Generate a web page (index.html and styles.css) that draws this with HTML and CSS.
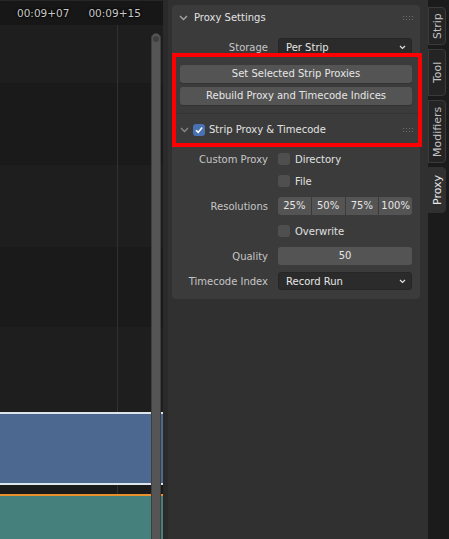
FILE: index.html
```html
<!DOCTYPE html>
<html>
<head>
    <title>Sequencer - Proxy</title>
    <link rel="stylesheet" href="styles.css">
</head>
<body>
    <div class="app">
        <div class="timeline">
            <div class="ruler">
                <span class="tc">00:09+07</span>
                <span class="tc">00:09+15</span>
            </div>
            <div class="chan chan-light" style="height: 58px"></div>
            <div class="chan chan-dark" style="height: 82px"></div>
            <div class="chan chan-light" style="height: 82px"></div>
            <div class="chan chan-dark" style="height: 80px"></div>
            <div class="chan chan-light" style="height: 85px"></div>
            <div class="strip-movie"></div>
            <div class="chan chan-dark" style="height: 9px"></div>
            <div class="strip-sound"></div>
            <div class="scrollbar"></div>
        </div>

        <div class="sidebar">
            <div class="panel">
                <div class="panel-head">
                    <svg class="chevron" width="9" height="6" viewBox="0 0 9 6"><path d="M1 1 L4.5 4.5 L8 1" fill="none" stroke="#a8a8a8" stroke-width="1.3"/></svg>
                    <span class="panel-title">Proxy Settings</span>
                    <span class="grip"></span>
                </div>

                <div class="prop-row storage-row">
                    <span class="prop-label">Storage</span>
                    <div class="dropdown">
                        <span>Per Strip</span>
                        <svg width="7" height="5" viewBox="0 0 7 5"><path d="M1 1 L3.5 3.5 L6 1" fill="none" stroke="#e0e0e0" stroke-width="1.2"/></svg>
                    </div>
                </div>

                <div class="btn-col">
                    <div class="btn">Set Selected Strip Proxies</div>
                    <div class="btn">Rebuild Proxy and Timecode Indices</div>
                </div>

                <div class="subpanel-head">
                    <svg class="chevron" width="9" height="6" viewBox="0 0 9 6"><path d="M1 1 L4.5 4.5 L8 1" fill="none" stroke="#8a8a8a" stroke-width="1.3"/></svg>
                    <span class="check checked">
                        <svg width="10" height="10" viewBox="0 0 10 10"><path d="M2 5.2 L4.2 7.4 L8.2 2.6" fill="none" stroke="#fff" stroke-width="1.6"/></svg>
                    </span>
                    <span class="panel-title">Strip Proxy &amp; Timecode</span>
                    <span class="grip"></span>
                </div>

                <div class="prop-row first-row">
                    <span class="prop-label">Custom Proxy</span>
                    <div class="check-field"><span class="check"></span>Directory</div>
                </div>
                <div class="prop-row tight-row">
                    <span class="prop-label"></span>
                    <div class="check-field"><span class="check"></span>File</div>
                </div>
                <div class="prop-row">
                    <span class="prop-label">Resolutions</span>
                    <div class="toggle-group">
                        <span class="toggle">25%</span>
                        <span class="toggle">50%</span>
                        <span class="toggle">75%</span>
                        <span class="toggle">100%</span>
                    </div>
                </div>
                <div class="prop-row">
                    <span class="prop-label"></span>
                    <div class="check-field"><span class="check"></span>Overwrite</div>
                </div>
                <div class="prop-row">
                    <span class="prop-label">Quality</span>
                    <div class="slider">50</div>
                </div>
                <div class="prop-row">
                    <span class="prop-label">Timecode Index</span>
                    <div class="dropdown">
                        <span>Record Run</span>
                        <svg width="7" height="5" viewBox="0 0 7 5"><path d="M1 1 L3.5 3.5 L6 1" fill="none" stroke="#e0e0e0" stroke-width="1.2"/></svg>
                    </div>
                </div>
            </div>
        </div>

        <div class="tabs">
            <div class="tab" style="height: 38px; margin-top: 7px">Strip</div>
            <div class="tab" style="height: 47px">Tool</div>
            <div class="tab" style="height: 63px">Modifiers</div>
            <div class="tab active" style="height: 46px">Proxy</div>
        </div>

        <div class="highlight"></div>
    </div>
</body>
</html>
```

FILE: styles.css
```css
body {
    margin: 0;
    background-color: #181818;
    font-family: "DejaVu Sans", sans-serif;
    font-size: 10px;
    color: #e6e6e6;
}

.app {
    position: relative;
    display: flex;
    width: 449px;
    height: 539px;
    overflow: hidden;
}

/* sequencer timeline */
.timeline {
    position: relative;
    display: flex;
    flex-direction: column;
    width: 163px;
    flex-shrink: 0;
    background-color: #1c1c1c;
}

.ruler {
    display: flex;
    align-items: center;
    gap: 19px;
    height: 25px;
    flex-shrink: 0;
    padding-left: 17px;
    box-sizing: border-box;
    background-color: #171717;
    border-top: 1px solid #262626;
    font-size: 10.5px;
    color: #c8c8c8;
}

.tc {
    text-shadow: 0 0 2px #000, 0 0 3px #000;
}

.chan {
    flex-shrink: 0;
    background-image: linear-gradient(90deg, transparent 117px, #313131 117px, #313131 118px, transparent 118px);
}

.chan-light {
    background-color: #1e1e1e;
}

.chan-dark {
    background-color: #1a1a1a;
}

.strip-movie {
    height: 69px;
    flex-shrink: 0;
    background-color: #4d6890;
    border-top: 2px solid #dde4ec;
    border-bottom: 2px solid #dde4ec;
}

.strip-sound {
    flex-grow: 1;
    background-color: #46807d;
    border-top: 2px solid #e8912c;
}

.scrollbar {
    position: absolute;
    left: 151px;
    top: 33px;
    bottom: -5px;
    width: 10px;
    box-sizing: border-box;
    background-color: #555;
    border: 1px solid #3e3e3e;
    border-radius: 5px 5px 0 0;
}

.scrollbar::before {
    content: "";
    position: absolute;
    left: 1px;
    top: 2px;
    width: 6px;
    height: 6px;
    border-radius: 50%;
    background-color: #3f3f3f;
}

/* sidebar */
.sidebar {
    width: 265px;
    flex-shrink: 0;
    box-sizing: border-box;
    border-left: 5px solid #2a2a2a;
    background-color: #303030;
    padding-top: 5px;
}

.panel {
    margin: 0 8px 0 4px;
    padding-bottom: 9px;
    background-color: #3b3b3b;
    border-radius: 4px;
}

.panel-head {
    display: flex;
    align-items: center;
    height: 25px;
    padding-left: 7px;
}

.chevron {
    flex-shrink: 0;
}

.panel-title {
    margin-left: 6px;
    color: #e2e2e2;
}

.grip {
    margin-left: auto;
    margin-right: 6px;
    width: 12px;
    height: 5px;
    background-image: radial-gradient(circle, #707070 0.8px, transparent 1px);
    background-size: 3px 3px;
}

.prop-row {
    display: flex;
    align-items: center;
    height: 18px;
    margin-top: 7px;
}

.storage-row {
    margin-top: 8px;
}

.first-row {
    margin-top: 5px;
}

.tight-row {
    margin-top: 4px;
}

.prop-label {
    width: 96px;
    flex-shrink: 0;
    text-align: right;
    color: #c6c6c6;
}

.dropdown,
.slider,
.toggle-group,
.check-field {
    width: 134px;
    height: 18px;
    margin-left: 10px;
    box-sizing: border-box;
}

.dropdown {
    display: flex;
    align-items: center;
    justify-content: space-between;
    padding: 0 5px 0 7px;
    background-color: #2b2b2b;
    border: 1px solid #262626;
    border-radius: 3px;
    color: #e6e6e6;
}

.btn-col {
    display: flex;
    flex-direction: column;
    gap: 4px;
    margin-top: 9px;
    padding: 0 8px;
}

.btn {
    height: 18px;
    line-height: 18px;
    text-align: center;
    background-color: #545454;
    border-radius: 3px;
    box-shadow: 0 1px 0 #333;
    color: #e6e6e6;
}

.subpanel-head {
    display: flex;
    align-items: center;
    height: 31px;
    margin-top: 8px;
    padding-left: 8px;
    border-top: 1px solid #333;
}

.subpanel-head .check {
    margin-left: 4px;
}

.subpanel-head .panel-title {
    margin-left: 4px;
}

.check {
    display: inline-flex;
    align-items: center;
    justify-content: center;
    width: 12px;
    height: 12px;
    flex-shrink: 0;
    border-radius: 3px;
    background-color: #4f4f4f;
}

.check.checked {
    background-color: #4772b3;
}

.check-field {
    display: flex;
    align-items: center;
    gap: 5px;
    color: #e0e0e0;
}

.toggle-group {
    display: flex;
    gap: 1px;
}

.toggle {
    flex: 1;
    line-height: 18px;
    text-align: center;
    background-color: #545454;
    color: #e6e6e6;
}

.toggle:first-child {
    border-radius: 3px 0 0 3px;
}

.toggle:last-child {
    border-radius: 0 3px 3px 0;
}

.slider {
    line-height: 18px;
    text-align: center;
    background-color: #545454;
    border-radius: 3px;
    color: #e6e6e6;
}

/* region tabs */
.tabs {
    display: flex;
    flex-direction: column;
    gap: 4px;
    width: 21px;
    flex-shrink: 0;
    background-color: #1b1b1b;
}

.tab {
    display: flex;
    align-items: center;
    justify-content: center;
    width: 18px;
    box-sizing: border-box;
    writing-mode: vertical-rl;
    transform: rotate(180deg);
    font-size: 11px;
    color: #c2c2c2;
    background-color: #242424;
    border: 1px solid #3a3a3a;
    border-radius: 4px 0 0 4px;
}

.tab.active {
    background-color: #303030;
    border-color: #303030;
    color: #e8e8e8;
}

/* annotation box */
.highlight {
    position: absolute;
    left: 172px;
    top: 53px;
    width: 250px;
    height: 94px;
    box-sizing: border-box;
    border: 4px solid #ff0000;
    pointer-events: none;
}
```
